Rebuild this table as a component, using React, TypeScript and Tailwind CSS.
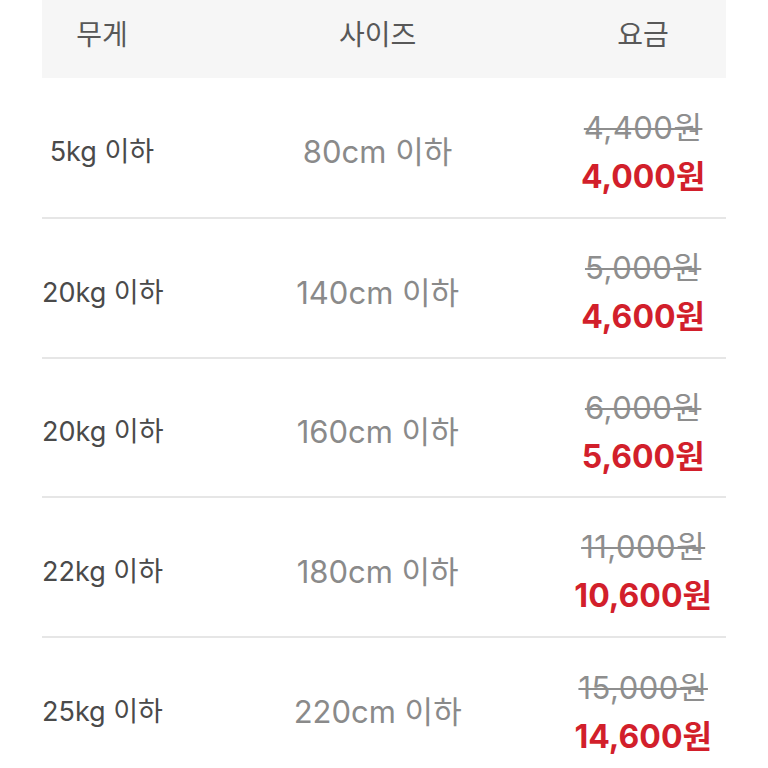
const rows = [
  { weight: "5kg 이하", size: "80cm 이하", old: "4,400원", price: "4,000원" },
  { weight: "20kg 이하", size: "140cm 이하", old: "5,000원", price: "4,600원" },
  { weight: "20kg 이하", size: "160cm 이하", old: "6,000원", price: "5,600원" },
  { weight: "22kg 이하", size: "180cm 이하", old: "11,000원", price: "10,600원" },
  { weight: "25kg 이하", size: "220cm 이하", old: "15,000원", price: "14,600원" },
];

export default function App() {
  return (
    <div
      className="w-[768px] h-[768px] overflow-hidden bg-white px-[42px]"
      style={{ fontFamily: 'Inter, "Noto Sans CJK KR", sans-serif' }}
    >
      <div className="flex h-[78px] items-start bg-[#f6f6f6] pt-[14px] text-[28px] text-[#585858]">
        <div className="w-[120px] text-center">무게</div>
        <div className="w-[395px] pl-[37px] text-center">사이즈</div>
        <div className="w-[170px] pl-[4px] text-center">요금</div>
      </div>
      {rows.map((r, i) => (
        <div
          key={i}
          className={`flex items-center pt-[10px] ${i === 0 ? "h-[141px]" : "h-[139.5px]"} ${i < rows.length - 1 ? "border-b-2 border-[#e6e6e6]" : ""}`}
        >
          <div className="w-[120px] whitespace-nowrap text-center text-[27px] text-[#4a4a4a]">{r.weight}</div>
          <div className="w-[395px] whitespace-nowrap pl-[37px] text-center text-[31px] text-[#8a8a8a]">{r.size}</div>
          <div className="flex w-[170px] flex-col items-center whitespace-nowrap pl-[4px]">
            <span className="text-[31px] leading-[40px] tracking-[0.5px] text-[#8e8e8e] line-through decoration-2">{r.old}</span>
            <span className="mt-[9px] text-[32px] font-bold leading-[40px] text-[#d21f2b]">{r.price}</span>
          </div>
        </div>
      ))}
    </div>
  );
}
